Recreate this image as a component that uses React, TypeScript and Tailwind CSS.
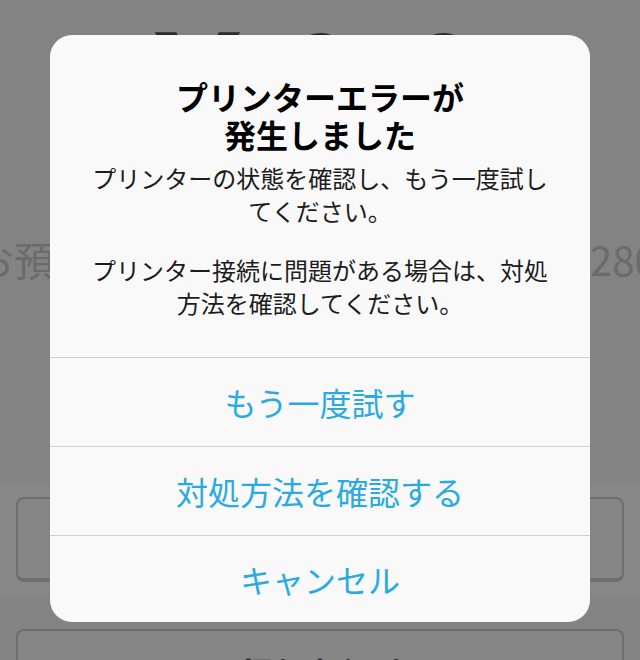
import React from "react";

const jp = { fontFamily: '"Noto Sans CJK JP", "Noto Sans", sans-serif' };

export default function App() {
  return (
    <div
      className="relative w-[640px] h-[660px] overflow-hidden bg-[#838383]"
      style={jp}
    >
      {/* background page (dimmed) */}
      <div className="flex flex-col">
        <div className="flex pt-[8px] h-[133px] leading-none font-bold text-[125px] text-[#2a2a2a] whitespace-nowrap">
          <div className="w-[135px] shrink-0" />
          <div className="w-[124px] shrink-0 text-center">￥</div>
          <div className="w-[123px] shrink-0 text-center">0</div>
          <div className="w-[123px] shrink-0 text-center">0</div>
        </div>
        <div className="flex mt-[106px] h-[40px] leading-[40px] text-[40px] text-[#6b6b6b] whitespace-nowrap">
          <div className="ml-[-26px] w-[616px] shrink-0">お預かり金額</div>
          <div className="shrink-0">2800</div>
        </div>
        <div className="mt-[203px] h-[115px] bg-[#878787] px-[16px] pt-[15px]">
          <div className="h-[85px] rounded-[8px] border-2 border-b-4 border-[#6e6e6e] bg-[#858585]" />
        </div>
        <div className="mt-[32px] px-[16px]">
          <div className="h-[60px] rounded-t-[8px] border-2 border-b-0 border-[#6e6e6e] bg-[#858585] flex justify-center pt-[21px] text-[32px] leading-[40px] font-bold text-[#2d2d2d]">
            領収書印刷
          </div>
        </div>
      </div>

      {/* alert dialog */}
      <div className="absolute left-[50px] top-[35px] w-[540px] rounded-[22px] bg-[#f9f9f9] flex flex-col overflow-hidden">
        <div className="flex flex-col items-center pt-[42px] pb-[38px]">
          <div className="text-[32px] leading-[38px] font-bold text-black text-center">
            プリンターエラーが
            <br />
            発生しました
          </div>
          <div className="mt-[8px] w-[464px] text-[24px] leading-[33px] text-[#1c1c1c] text-center">
            <p>プリンターの状態を確認し、もう一度試してください。</p>
            <p className="mt-[26px]">
              プリンター接続に問題がある場合は、対処方法を確認してください。
            </p>
          </div>
        </div>
        <div className="h-[89px] border-t border-[#cfcfcf] flex items-center justify-center text-[32px] text-[#2aaae2]">
          もう一度試す
        </div>
        <div className="h-[89px] border-t border-[#cfcfcf] flex items-center justify-center text-[32px] text-[#2aaae2]">
          対処方法を確認する
        </div>
        <div className="h-[87px] border-t border-[#cfcfcf] flex items-center justify-center text-[32px] text-[#2aaae2]">
          キャンセル
        </div>
      </div>
    </div>
  );
}
